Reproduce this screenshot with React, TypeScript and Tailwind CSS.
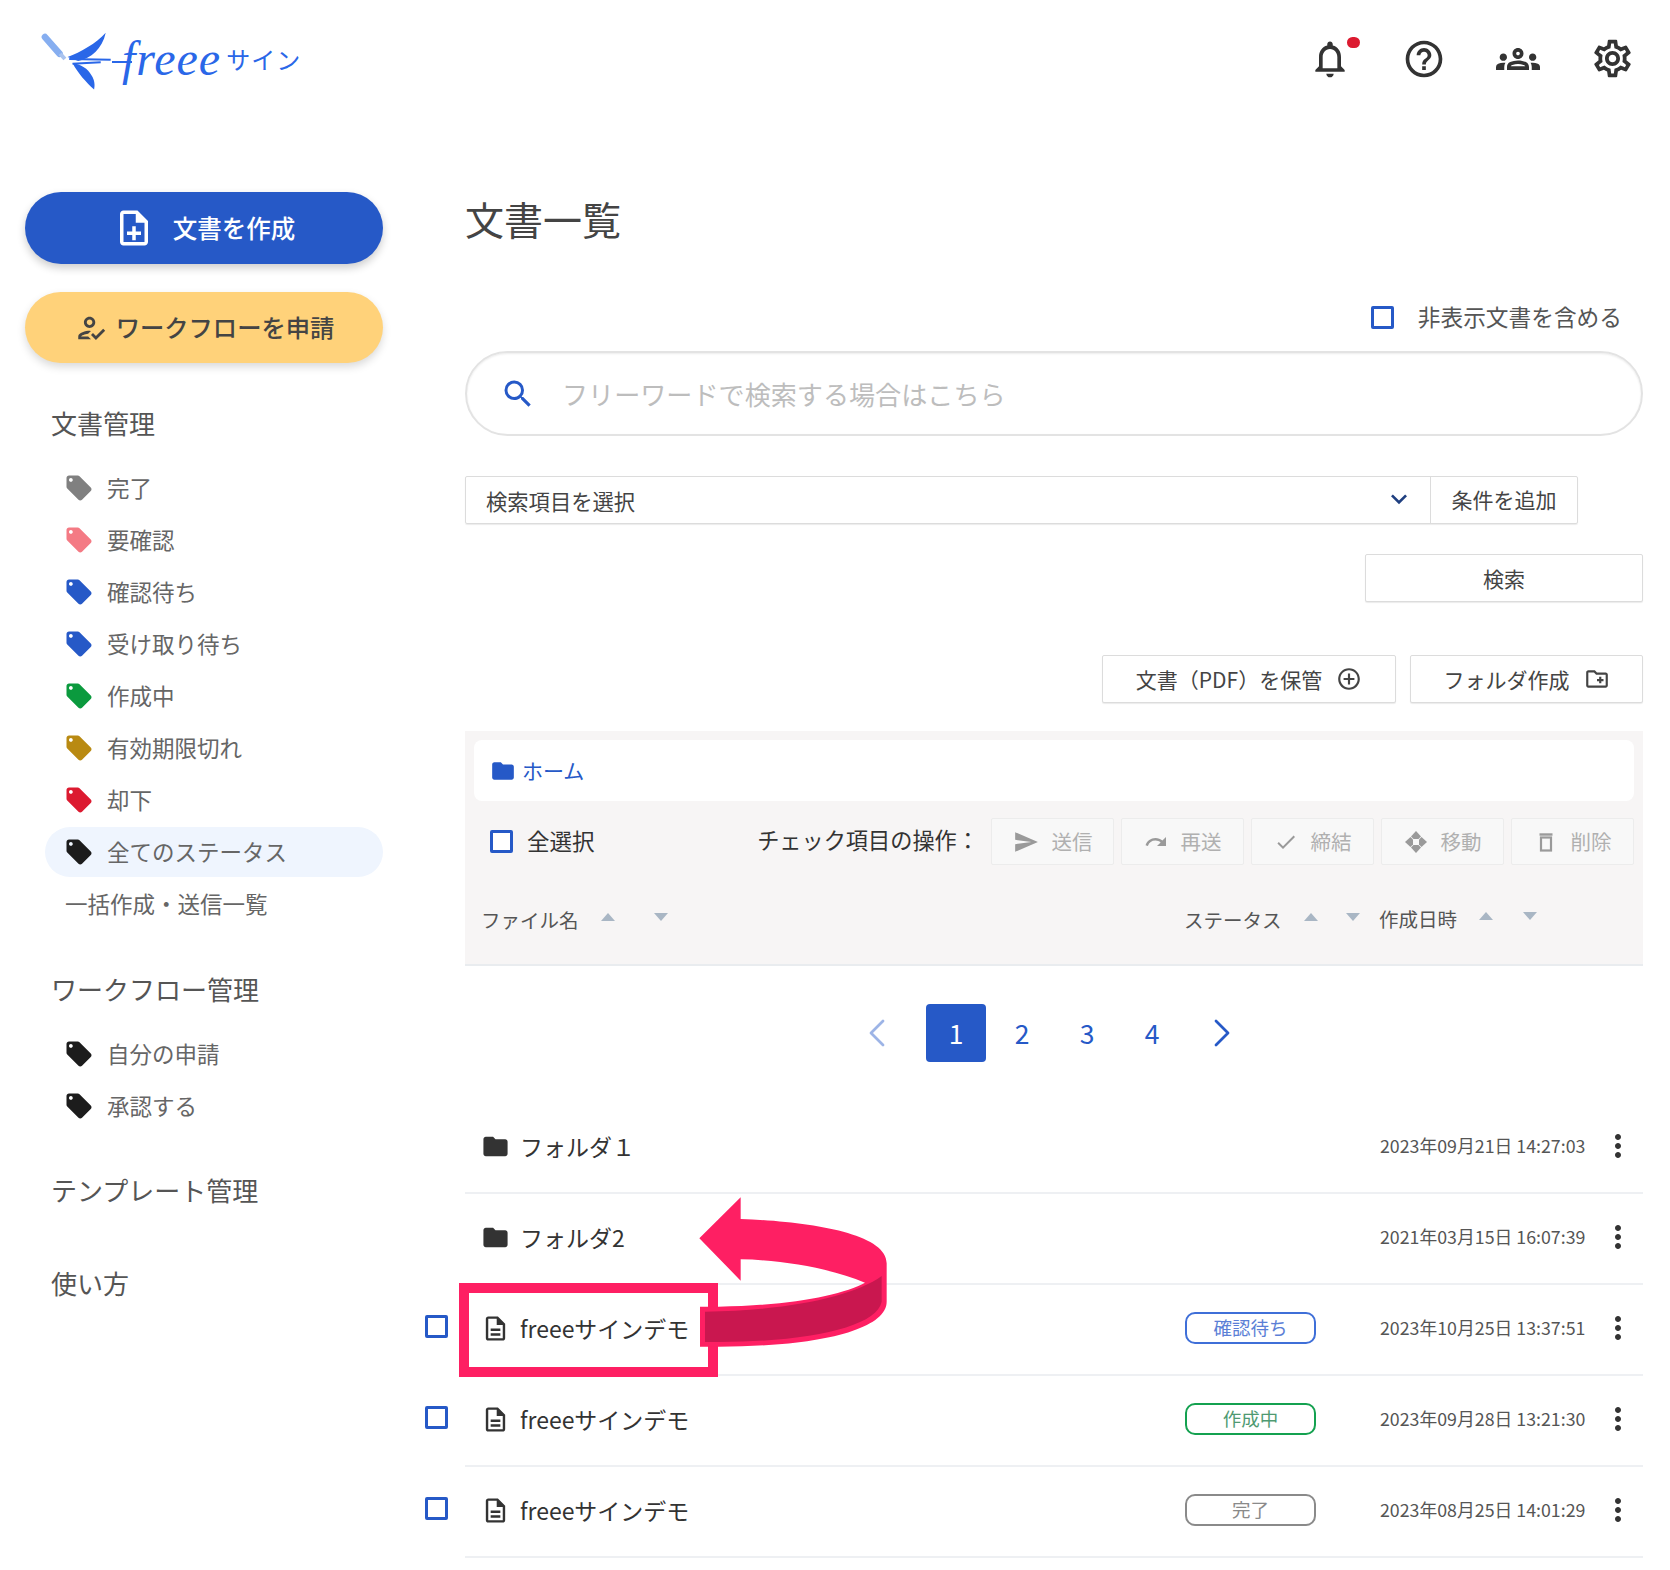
import type { ReactNode } from "react";
import {
  MdAddCircleOutline,
  MdCheck,
  MdFolder,
  MdHelpOutline,
  MdKeyboardArrowDown,
  MdLocalOffer,
  MdMoreVert,
  MdOutlineCreateNewFolder,
  MdOutlineDescription,
  MdOutlineGroups,
  MdOutlineHowToReg,
  MdOutlineNoteAdd,
  MdOutlineNotifications,
  MdOutlineSettings,
  MdRedo,
  MdSearch,
  MdSend,
} from "react-icons/md";
import { ChevronLeft, ChevronRight } from "lucide-react";

const statusItems = [
  { label: "完了", color: "text-[#808080]" },
  { label: "要確認", color: "text-[#f47a84]" },
  { label: "確認待ち", color: "text-[#2659c7]" },
  { label: "受け取り待ち", color: "text-[#2659c7]" },
  { label: "作成中", color: "text-[#0b9a3e]" },
  { label: "有効期限切れ", color: "text-[#b98a12]" },
  { label: "却下", color: "text-[#dc1a30]" },
];

const rows = [
  { name: "フォルダ１", folder: true, date: "2023年09月21日 14:27:03" },
  { name: "フォルダ2", folder: true, date: "2021年03月15日 16:07:39" },
  { name: "freeeサインデモ", status: "確認待ち", tone: "border-[#3f6fd8] text-[#5c7fd6]", date: "2023年10月25日 13:37:51" },
  { name: "freeeサインデモ", status: "作成中", tone: "border-[#14a150] text-[#4f9a72]", date: "2023年09月28日 13:21:30" },
  { name: "freeeサインデモ", status: "完了", tone: "border-[#8a8a8a] text-[#8a8a8a]", date: "2023年08月25日 14:01:29" },
];

function Logo() {
  return (
    <div className="flex items-start pl-[41px] pt-[31px]">
      <svg viewBox="120 92 220 180" className="w-[73px] h-[60px] shrink-0">
        <path d="M132 110 L176 160" stroke="#86aef0" strokeWidth="20" strokeLinecap="round" fill="none" />
        <path d="M178 160 L192 176" stroke="#a9c3ef" strokeWidth="12" fill="none" />
        <path d="M200 170 C240 155 285 130 315 97 C305 145 270 175 232 182 Z" fill="#2a67e8" />
        <path d="M215 188 C240 192 262 205 272 225 C282 240 283 255 280 268 C255 245 232 220 215 188 Z" fill="#2a67e8" />
        <path d="M205 176 L330 178 M215 190 L300 186" stroke="#2a67e8" strokeWidth="6" fill="none" />
      </svg>
      <div className="w-[20px] h-[2px] bg-[#2a67e8] mt-[30px] -ml-[2px] shrink-0" />
      <span className="font-['Liberation_Serif',serif] italic text-[48px] leading-[56px] tracking-[1px] text-[#2a67e8] -ml-[10px]">freee</span>
      <span className="text-[24px] leading-[36px] tracking-[1px] text-[#2a67e8] ml-[5px] mt-[10px]">サイン</span>
    </div>
  );
}

function TopIcons() {
  return (
    <div className="flex items-center gap-[50px] pr-[35px] pt-[36px] text-[#333]">
      <span className="relative w-[44px] h-[44px]">
        <MdOutlineNotifications size={44} className="-ml-[1px]" />
        <span className="absolute left-[38px] top-0 w-[13px] h-[11px] rounded-full bg-[#dc1a30]" />
      </span>
      <MdHelpOutline size={44} className="-ml-[1px]" />
      <MdOutlineGroups size={44} />
      <MdOutlineSettings size={45} />
    </div>
  );
}

function SideHeading({ children, className = "" }: { children: ReactNode; className?: string }) {
  return <div className={`pl-[26px] h-[36px] leading-[36px] text-[26px] text-[#555] ${className}`}>{children}</div>;
}

function TagRow({ label, color, active }: { label: string; color: string; active?: boolean }) {
  return (
    <div className="h-[52px] flex items-center">
      <div className={`w-full h-[50px] flex items-center pl-[19px] rounded-full ${active ? "bg-[#eff5fe]" : ""}`}>
        <MdLocalOffer size={30} className={`shrink-0 ${color}`} />
        <span className="ml-[13px] text-[22.5px] text-[#666]">{label}</span>
      </div>
    </div>
  );
}

function Sidebar() {
  return (
    <aside className="w-[358px] ml-[25px] shrink-0">
      <button className="w-full h-[72px] rounded-full bg-[#2659c7] text-white flex items-center justify-center gap-[18px] shadow-[0_4px_8px_rgba(0,0,0,0.2)]">
        <MdOutlineNoteAdd size={42} />
        <span className="text-[24.5px] font-medium">文書を作成</span>
      </button>
      <button className="mt-[28px] w-full h-[71px] rounded-full bg-[#ffd27a] text-[#444] flex items-center justify-center gap-[8px] shadow-[0_4px_8px_rgba(0,0,0,0.15)]">
        <MdOutlineHowToReg size={34} />
        <span className="text-[24.3px] font-medium">ワークフローを申請</span>
      </button>

      <SideHeading className="mt-[42px]">文書管理</SideHeading>
      <div className="mt-[21px] ml-[20px]">
        {statusItems.map((item) => (
          <TagRow key={item.label} label={item.label} color={item.color} />
        ))}
        <TagRow label="全てのステータス" color="text-[#1c1c1c]" active />
        <div className="h-[52px] flex items-center pl-[20px] text-[22.5px] text-[#666]">一括作成・送信一覧</div>
      </div>

      <SideHeading className="mt-[41px]">ワークフロー管理</SideHeading>
      <div className="mt-[21px] ml-[20px]">
        <TagRow label="自分の申請" color="text-[#1c1c1c]" />
        <TagRow label="承認する" color="text-[#1c1c1c]" />
      </div>

      <SideHeading className="mt-[40px]">テンプレート管理</SideHeading>
      <SideHeading className="mt-[57px]">使い方</SideHeading>
    </aside>
  );
}

function CheckBox({ className = "" }: { className?: string }) {
  return <span className={`block w-[23px] h-[23px] shrink-0 rounded-[2px] border-[3px] border-[#2659c7] bg-white ${className}`} />;
}

function SortArrows({ gap, className = "" }: { gap: string; className?: string }) {
  return (
    <span className={`flex items-center ${gap} ${className}`}>
      <svg viewBox="0 0 14 8" className="w-[14px] h-[8px] -mt-[6px]"><polygon points="7,0 14,8 0,8" fill="#a9b6c4" /></svg>
      <svg viewBox="0 0 14 8" className="w-[14px] h-[8px] -mt-[6px]"><polygon points="0,0 14,0 7,8" fill="#a9b6c4" /></svg>
    </span>
  );
}

function MoveIcon() {
  return (
    <svg viewBox="0 0 24 24" className="w-[24px] h-[24px]" fill="currentColor">
      <polygon points="12,1 17,6.5 14.5,9 9.5,9 7,6.5" />
      <polygon points="12,23 17,17.5 14.5,15 9.5,15 7,17.5" />
      <polygon points="1,12 6.5,7 9,9.5 9,14.5 6.5,17" />
      <polygon points="23,12 17.5,7 15,9.5 15,14.5 17.5,17" />
    </svg>
  );
}

function TrashIcon() {
  return (
    <svg viewBox="0 0 24 24" className="w-[24px] h-[24px]" fill="none" stroke="currentColor">
      <path d="M5.5 4.5 H18.5" strokeWidth="2.4" />
      <rect x="7" y="7.5" width="10" height="13" strokeWidth="2.2" />
    </svg>
  );
}

function ActionButton({ icon, label }: { icon: ReactNode; label: string }) {
  return (
    <span className="w-[123px] h-[47px] flex items-center justify-center gap-[13px] rounded-[2px] border border-[#ececec] bg-[#f8f8f8] text-[#b0b0b0] text-[20.5px]">
      <span className="text-[#9a9a9a]">{icon}</span>
      {label}
    </span>
  );
}

function OutlineButton({ children, className = "" }: { children: ReactNode; className?: string }) {
  return (
    <button className={`h-[48px] flex items-center justify-center border border-[#dcdcdc] rounded-[2px] bg-white shadow-[0_1px_1px_rgba(0,0,0,0.08)] text-[21px] text-[#444] ${className}`}>
      {children}
    </button>
  );
}

function Panel() {
  return (
    <section className="mt-[28px] h-[235px] bg-[#f7f5f5] border-b-2 border-[#e9ecef] px-[9px] pt-[9px]">
      <div className="h-[61px] rounded-[8px] bg-white flex items-center pl-[16px] text-[#2659c7] text-[21px]">
        <MdFolder size={26} />
        <span className="ml-[6px]">ホーム</span>
      </div>
      <div className="mt-[17px] h-[47px] flex items-center">
        <CheckBox className="ml-[16px] -mt-[1px]" />
        <span className="ml-[14px] -mt-[1px] text-[22.5px] text-[#333]">全選択</span>
        <span className="ml-auto mr-[12px] -mt-[3px] text-[22.2px] text-[#333]">チェック項目の操作：</span>
        <div className="flex gap-[7px]">
          <ActionButton icon={<MdSend size={26} />} label="送信" />
          <ActionButton icon={<MdRedo size={24} />} label="再送" />
          <ActionButton icon={<MdCheck size={24} />} label="締結" />
          <ActionButton icon={<MoveIcon />} label="移動" />
          <ActionButton icon={<TrashIcon />} label="削除" />
        </div>
      </div>
      <div className="mt-[35px] h-[40px] flex items-center text-[#555] text-[19.5px]">
        <div className="w-[710px] pl-[7px] flex items-center shrink-0">
          <span>ファイル名</span>
          <SortArrows gap="gap-[39px]" className="ml-[22px]" />
        </div>
        <div className="w-[195px] flex items-center shrink-0">
          <span>ステータス</span>
          <SortArrows gap="gap-[28px]" className="ml-[22px]" />
        </div>
        <div className="flex items-center -mt-[2px]">
          <span>作成日時</span>
          <SortArrows gap="gap-[30px]" className="ml-[22px]" />
        </div>
      </div>
    </section>
  );
}

function Pagination() {
  return (
    <nav className="mt-[38px] h-[58px] flex items-center pl-[388px] text-[#2659c7] text-[26.5px]">
      <ChevronLeft size={48} strokeWidth={1.4} className="text-[#9db4e6]" />
      <span className="ml-[25px] w-[60px] h-[58px] rounded-[4px] bg-[#2659c7] text-white flex items-center justify-center">1</span>
      <span className="ml-[16px] w-[40px] text-center">2</span>
      <span className="ml-[25px] w-[40px] text-center">3</span>
      <span className="ml-[25px] w-[40px] text-center">4</span>
      <ChevronRight size={48} strokeWidth={1.4} className="ml-[26px]" />
    </nav>
  );
}

function FileRow({ row }: { row: (typeof rows)[number] }) {
  return (
    <div className="h-[91px] flex items-center border-b-2 border-[#eef0f3] relative pb-[3px]">
      <div className="w-[720px] pl-[16px] flex items-center shrink-0">
        {!row.folder && <CheckBox className="absolute -left-[40px] top-[30px]" />}
        <span className="w-[29px] flex justify-center text-[#333]">
          {row.folder ? <MdFolder size={29} /> : <MdOutlineDescription size={33} />}
        </span>
        <span className="ml-[10px] text-[23px] text-[#333]">{row.name}</span>
      </div>
      <div className="w-[131px] shrink-0">
        {row.status && (
          <span className={`h-[32px] flex items-center justify-center rounded-[10px] border-2 text-[18.5px] ${row.tone}`}>{row.status}</span>
        )}
      </div>
      <span className="ml-[64px] -mt-[2px] w-[206px] text-[17.8px] text-[#555] whitespace-nowrap">{row.date}</span>
      <MdMoreVert size={36} className="ml-[14px] text-[#333]" />
    </div>
  );
}

function Main() {
  return (
    <main className="ml-[82px] w-[1178px] shrink-0">
      <h1 className="h-[52px] leading-[52px] text-[39px] text-[#444]">文書一覧</h1>
      <div className="mt-[58px] h-[30px] flex items-center justify-end pr-[21px]">
        <CheckBox />
        <span className="ml-[24px] text-[22.7px] text-[#555]">非表示文書を含める</span>
      </div>
      <div className="mt-[19px] h-[85px] rounded-full border-2 border-[#e3e3e3] shadow-[inset_0_1px_2px_rgba(0,0,0,0.08)] flex items-center pl-[33px]">
        <MdSearch size={36} className="text-[#2659c7]" />
        <span className="ml-[26px] mt-[2px] text-[26.1px] text-[#bdbdbd]">フリーワードで検索する場合はこちら</span>
      </div>
      <div className="mt-[40px] w-[1113px] h-[48px] flex border border-[#dcdcdc] rounded-[2px] shadow-[0_1px_1px_rgba(0,0,0,0.08)] text-[21.3px] text-[#444]">
        <div className="flex-1 flex items-center pl-[20px]">
          <span className="mt-[1px]">検索項目を選択</span>
          <MdKeyboardArrowDown size={32} className="ml-auto mr-[15px] -mt-[2px] text-[#1f3f80]" />
        </div>
        <div className="w-[147px] flex items-center justify-center border-l border-[#dcdcdc] text-[21px]">条件を追加</div>
      </div>
      <div className="mt-[30px] flex justify-end">
        <OutlineButton className="w-[278px]">
          <span className="mt-[1px]">検索</span>
        </OutlineButton>
      </div>
      <div className="mt-[53px] flex justify-end gap-[14px]">
        <OutlineButton className="w-[294px] gap-[14px]">
          <span className="mt-[1px]">文書（PDF）を保管</span>
          <MdAddCircleOutline size={26} />
        </OutlineButton>
        <OutlineButton className="w-[233px] gap-[14px]">
          <span className="mt-[1px]">フォルダ作成</span>
          <MdOutlineCreateNewFolder size={26} />
        </OutlineButton>
      </div>
      <Panel />
      <Pagination />
      <div className="mt-[41px]">
        {rows.map((row, i) => (
          <FileRow key={i} row={row} />
        ))}
      </div>
    </main>
  );
}

// pink callout drawn over the third row
function Callout() {
  return (
    <>
      <div className="absolute left-[459px] top-[1283px] w-[259px] h-[94px] border-[10px] border-[#fe1f63]" />
      <svg viewBox="0 0 1560 900" className="absolute left-[410px] top-[1180px] w-[520px] h-[300px]">
        <path d="M868 175 L992 52 L992 117 C1200 125 1430 160 1430 250 L1430 365 C1430 450 1220 500 925 500 L870 500 L870 380 L925 380 C1130 378 1300 345 1365 308 C1260 265 1120 240 992 238 L992 302 Z" fill="#fe1f63" />
        <path d="M885 395 C1130 392 1330 350 1415 288 L1415 365 C1400 440 1200 485 925 486 L885 486 Z" fill="#c9174f" />
      </svg>
    </>
  );
}

export default function App() {
  return (
    <div className="relative w-[1670px] h-[1570px] overflow-hidden bg-white font-['Noto_Sans_CJK_JP','Noto_Sans',sans-serif]">
      <header className="h-[192px] flex justify-between items-start">
        <Logo />
        <TopIcons />
      </header>
      <div className="flex">
        <Sidebar />
        <Main />
      </div>
      <Callout />
    </div>
  );
}
